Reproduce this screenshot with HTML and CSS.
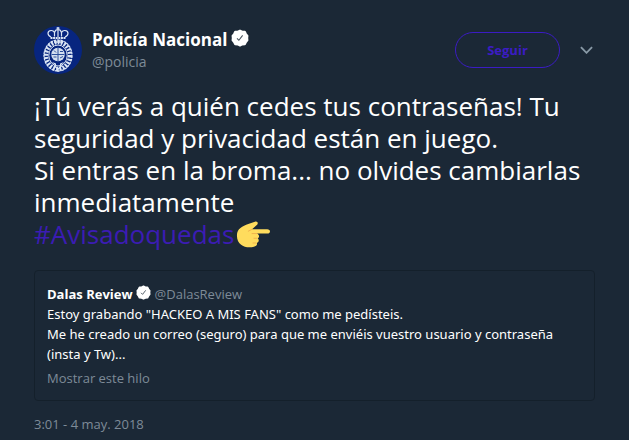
FILE: index.html
```
<!DOCTYPE html>
<html lang="es">
<head>
  <meta charset="UTF-8">
  <meta name="viewport" content="width=device-width, initial-scale=1.0">
  <title>Policía Nacional</title>
  <link rel="stylesheet" href="styles.css">
</head>
<body>
  <svg class="symbols" aria-hidden="true">
    <symbol id="verified" viewBox="0 0 24 24">
      <path fill="#fff" d="M12 2l3 1.500 3.500.2 1.500 3 2 2.500-.3 2.800.3 3-2 2.500-1.500 3-3.500.2-3 1.500-3-1.500-3.500-.2-1.500-3L2 15l.3-3L2 9.200l2-2.500 1.500-3L9 3.500z" stroke="#fff" stroke-width="2.500" stroke-linejoin="round"/>
      <path fill="none" stroke="#46515c" stroke-width="1.400" d="M8 12.500l2.500 2.500 5-6.500"/>
    </symbol>
  </svg>

  <article class="tweet">
    <header class="tweet-header">
      <svg class="avatar" viewBox="0 0 48 48" role="img" aria-label="Policía Nacional">
        <circle cx="24" cy="24" r="24" fill="#07257f"/>
        <g fill="none" stroke="#dce6f5">
          <!-- corona -->
          <path stroke-width="1.200" d="M17 11c-4-2-4-6 0-6.500 2-.2 3 1 3.500 2 .5-2 2-3 3.500-3s3 1 3.500 3c.5-1 1.500-2.200 3.500-2C35 5 35 9 31 11M24 1v10M22.500 2.200h3M20.500 6.500v4M27.500 6.500v4"/>
          <path stroke-width="2" stroke-dasharray="2 .6" d="M16.500 12h15"/>
          <!-- placa -->
          <ellipse cx="24" cy="29.500" rx="12" ry="13.500" stroke-width="4.500" stroke-dasharray="2 1.300"/>
          <ellipse cx="24" cy="29.500" rx="14" ry="15.500" stroke-width="1.200" stroke-dasharray="2.600 .8"/>
          <ellipse cx="24" cy="29.500" rx="9.200" ry="10.500" stroke-width="1"/>
          <path stroke-width="1.500" d="M20 16h8M20 39.500l4 3.500 4-3.500M24 42v4"/>
        </g>
        <circle cx="24" cy="28.500" r="6.800" fill="#d3def0"/>
        <path fill="none" stroke="#2c4f9b" stroke-width="1" d="M24 22v13M17.500 28.500h13M20 24.500l2 2M26 25.500h3M19.500 31h3M26 32l3-1.500"/>
        <path fill="#dce6f5" d="M18 36l4 1.500V40zM30 36l-4 1.500V40z"/>
      </svg>
      <div class="author">
        <a class="name" href="#">Policía Nacional<svg class="badge"><use href="#verified"/></svg></a>
        <a class="handle" href="#">@policia</a>
      </div>
      <button class="follow" type="button">Seguir</button>
      <button class="more" type="button" aria-label="Más">
        <svg viewBox="0 0 14 8"><path d="M1 1l6 6 6-6"/></svg>
      </button>
    </header>

    <div class="tweet-text">
      <p>¡Tú verás a quién cedes tus contraseñas! Tu seguridad y privacidad están en juego.<br>Si entras en la broma... no olvides cambiarlas inmediatamente</p>
      <p class="tags">
        <a class="hashtag" href="#">#Avisadoquedas</a>
        <svg class="hand" viewBox="0 0 36 28" role="img" aria-label="Mano señalando">
          <path fill="#ffdc5d" d="M1 15C1 8 7 5 13 3l7-2.500c3-1 4 2 2 3.500l-5 4.500h16c4 0 4 4.500 0 4.500H22c3 1 3 4 1 5 2 2 1 4-1 5 1 2-1 3.500-3 4-8 2-18-1-18-12z"/>
          <path fill="none" stroke="#efb04c" stroke-width="1" stroke-linecap="round" d="M17 8.500l-4 2M22 13h-5M22 18h-3M21 23h-3"/>
        </svg>
      </p>
    </div>

    <section class="quote">
      <div class="quote-author">
        <strong>Dalas Review</strong><svg class="badge"><use href="#verified"/></svg>
        <span class="quote-handle">@DalasReview</span>
      </div>
      <p class="quote-text">Estoy grabando "HACKEO A MIS FANS" como me pedísteis.<br>Me he creado un correo (seguro) para que me enviéis vuestro usuario y contraseña (insta y Tw)...</p>
      <a class="thread" href="#">Mostrar este hilo</a>
    </section>

    <time class="date" datetime="2018-05-04T03:01">3:01 - 4 may. 2018</time>
  </article>
</body>
</html>
```
FILE: styles.css
```
body {
  margin: 0;
  background-color: #1b2836;
  color: #fff;
  font-family: "Open Sans", "Noto Sans", sans-serif;
  font-size: 13px;
  line-height: 20px;
}

a {
  color: inherit;
  text-decoration: none;
}

p {
  margin: 0;
}

button {
  padding: 0;
  background: none;
  cursor: pointer;
  font-family: inherit;
}

.symbols {
  display: none;
}

.tweet {
  padding: 26px 34px 0;
}

.tweet-header {
  display: flex;
  align-items: center;
  margin-bottom: 16px;
  padding-right: 2px;
}

.avatar {
  width: 48px;
  height: 48px;
  margin-right: 10px;
}

.author {
  display: flex;
  flex-direction: column;
  flex-grow: 1;
}

.name {
  display: flex;
  align-items: center;
  gap: 4px;
  font-size: 17px;
  font-weight: bold;
  line-height: 24px;
}

.name .badge {
  width: 18px;
  height: 18px;
  margin-bottom: 4px;
}

.handle,
.quote-handle,
.thread,
.date {
  color: #7e8b98;
}

.handle {
  font-size: 14px;
}

.follow {
  width: 105px;
  height: 36px;
  border: 1px solid #3b1cc4;
  border-radius: 18px;
  color: #3b1cc4;
  font-size: 13px;
  font-weight: bold;
}

.more {
  margin-left: 20px;
  border: none;
}

.more svg {
  display: block;
  width: 13px;
  height: 8px;
}

.more path {
  fill: none;
  stroke: #8899a6;
  stroke-width: 2;
}

.tweet-text {
  font-size: 26px;
  line-height: 32px;
}

.tags {
  display: flex;
  align-items: center;
  gap: 2px;
}

.hashtag {
  color: #3b1cb4;
}

.hand {
  width: 34px;
  height: 27px;
}

.quote {
  margin-top: 20px;
  padding: 13px 12px 12px;
  border: 1px solid #14202b;
  border-radius: 4px;
}

.quote-author {
  display: flex;
  align-items: center;
}

.quote-author .badge {
  width: 15px;
  height: 15px;
  margin: 0 4px 4px 3px;
}

.quote-text {
  font-family: "Noto Sans", "Open Sans", sans-serif;
}

.thread {
  display: block;
  margin-top: 4px;
}

.date {
  display: block;
  margin-top: 13px;
}
```
